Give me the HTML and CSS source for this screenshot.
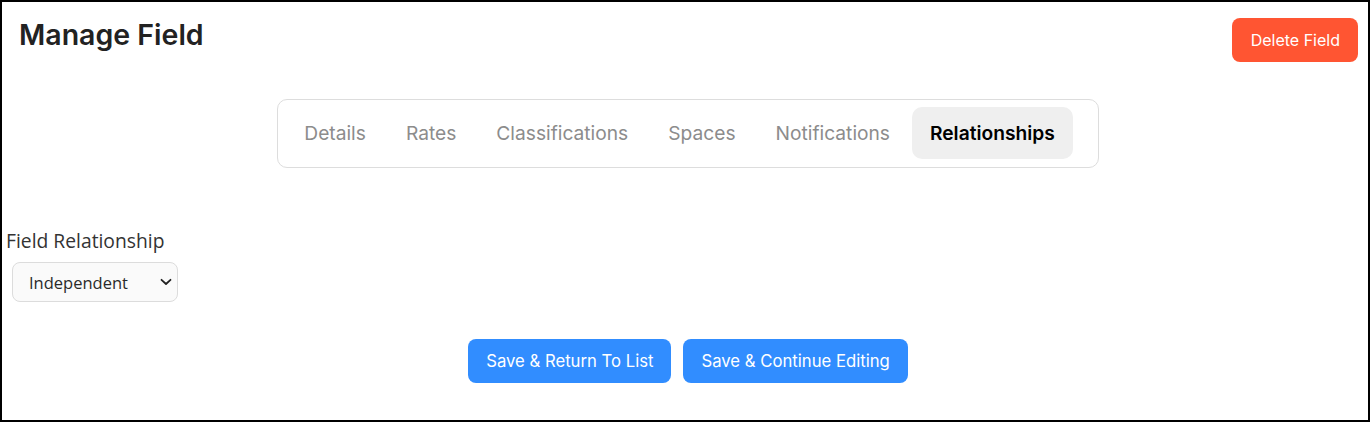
FILE: index.html
```html
<!DOCTYPE html>
<html>
<head>
<meta charset="utf-8">
<link rel="stylesheet" href="styles.css">
</head>
<body>
<div class="frame">
  <header class="header">
    <h1 class="title">Manage Field</h1>
    <button class="btn btn-danger">Delete Field</button>
  </header>
  <div class="tabs-row">
    <nav class="tabs">
      <span class="tab">Details</span>
      <span class="tab">Rates</span>
      <span class="tab">Classifications</span>
      <span class="tab">Spaces</span>
      <span class="tab">Notifications</span>
      <span class="tab tab-active">Relationships</span>
    </nav>
  </div>
  <div class="field">
    <label class="field-label">Field Relationship</label>
    <div class="select">
      <span class="select-value">Independent</span>
      <svg class="chevron" width="12" height="8" viewBox="0 0 12 8"><path d="M1.5 1.8 L6 6 L10.5 1.8" fill="none" stroke="#222" stroke-width="1.8" stroke-linecap="round" stroke-linejoin="round"/></svg>
    </div>
  </div>
  <div class="actions">
    <button class="btn btn-primary">Save &amp; Return To List</button>
    <button class="btn btn-primary">Save &amp; Continue Editing</button>
  </div>
</div>
</body>
</html>
```
FILE: styles.css
```css
* { box-sizing: border-box; }
html, body { margin: 0; padding: 0; background: #fff; }
body { font-family: Inter, "Liberation Sans", sans-serif; }
.frame {
  width: 1370px;
  height: 422px;
  border: 2px solid #000;
  padding: 16px 10px 0 3px;
}
.header {
  display: flex;
  justify-content: space-between;
  align-items: flex-start;
}
.title {
  margin: 0;
  padding: 0 0 0 14px;
  font-size: 28.5px;
  font-weight: 600;
  color: #222;
  line-height: 34px;
}
.btn {
  font-family: Inter, "Liberation Sans", sans-serif;
  border: none;
  border-radius: 8px;
  color: #fff;
  font-size: 16.7px;
  font-weight: 400;
  height: 44px;
  cursor: pointer;
}
.btn-danger { background: #ff5532; padding: 0 18px 0 19px; font-size: 16px; }
.btn-primary { background: #318dff; padding: 0 18px; }
.tabs-row {
  display: flex;
  justify-content: center;
  margin-top: 37px;
  padding-left: 13px;
}
.tabs {
  display: flex;
  gap: 4px;
  border: 1px solid #dddddd;
  border-radius: 10px;
  padding: 7px 25px 8px 8px;
}
.tab {
  font-size: 19.2px;
  color: #8c8c8c;
  padding: 14px 18px;
  line-height: 24px;
  border-radius: 10px;
}
.tab-active {
  background: #efefef;
  color: #000;
  font-weight: 600;
}
.field { margin-top: 61px; }
.field-label {
  display: block;
  font-family: "Open Sans", sans-serif;
  font-size: 19.3px;
  color: #333;
  line-height: 24px;
  padding-left: 1px;
}
.select {
  margin: 9px 0 0 7px;
  width: 166px;
  height: 40px;
  border: 1px solid #dcdcdc;
  border-radius: 8px;
  background: #fafafa;
  display: flex;
  align-items: center;
  justify-content: space-between;
  padding: 0 5px 0 16px;
}
.select-value {
  font-family: "Open Sans", sans-serif;
  font-size: 16.5px;
  color: #2a2a2a;
}
.actions {
  display: flex;
  justify-content: center;
  gap: 12px;
  margin-top: 37px;
  padding-left: 13px;
}
```
